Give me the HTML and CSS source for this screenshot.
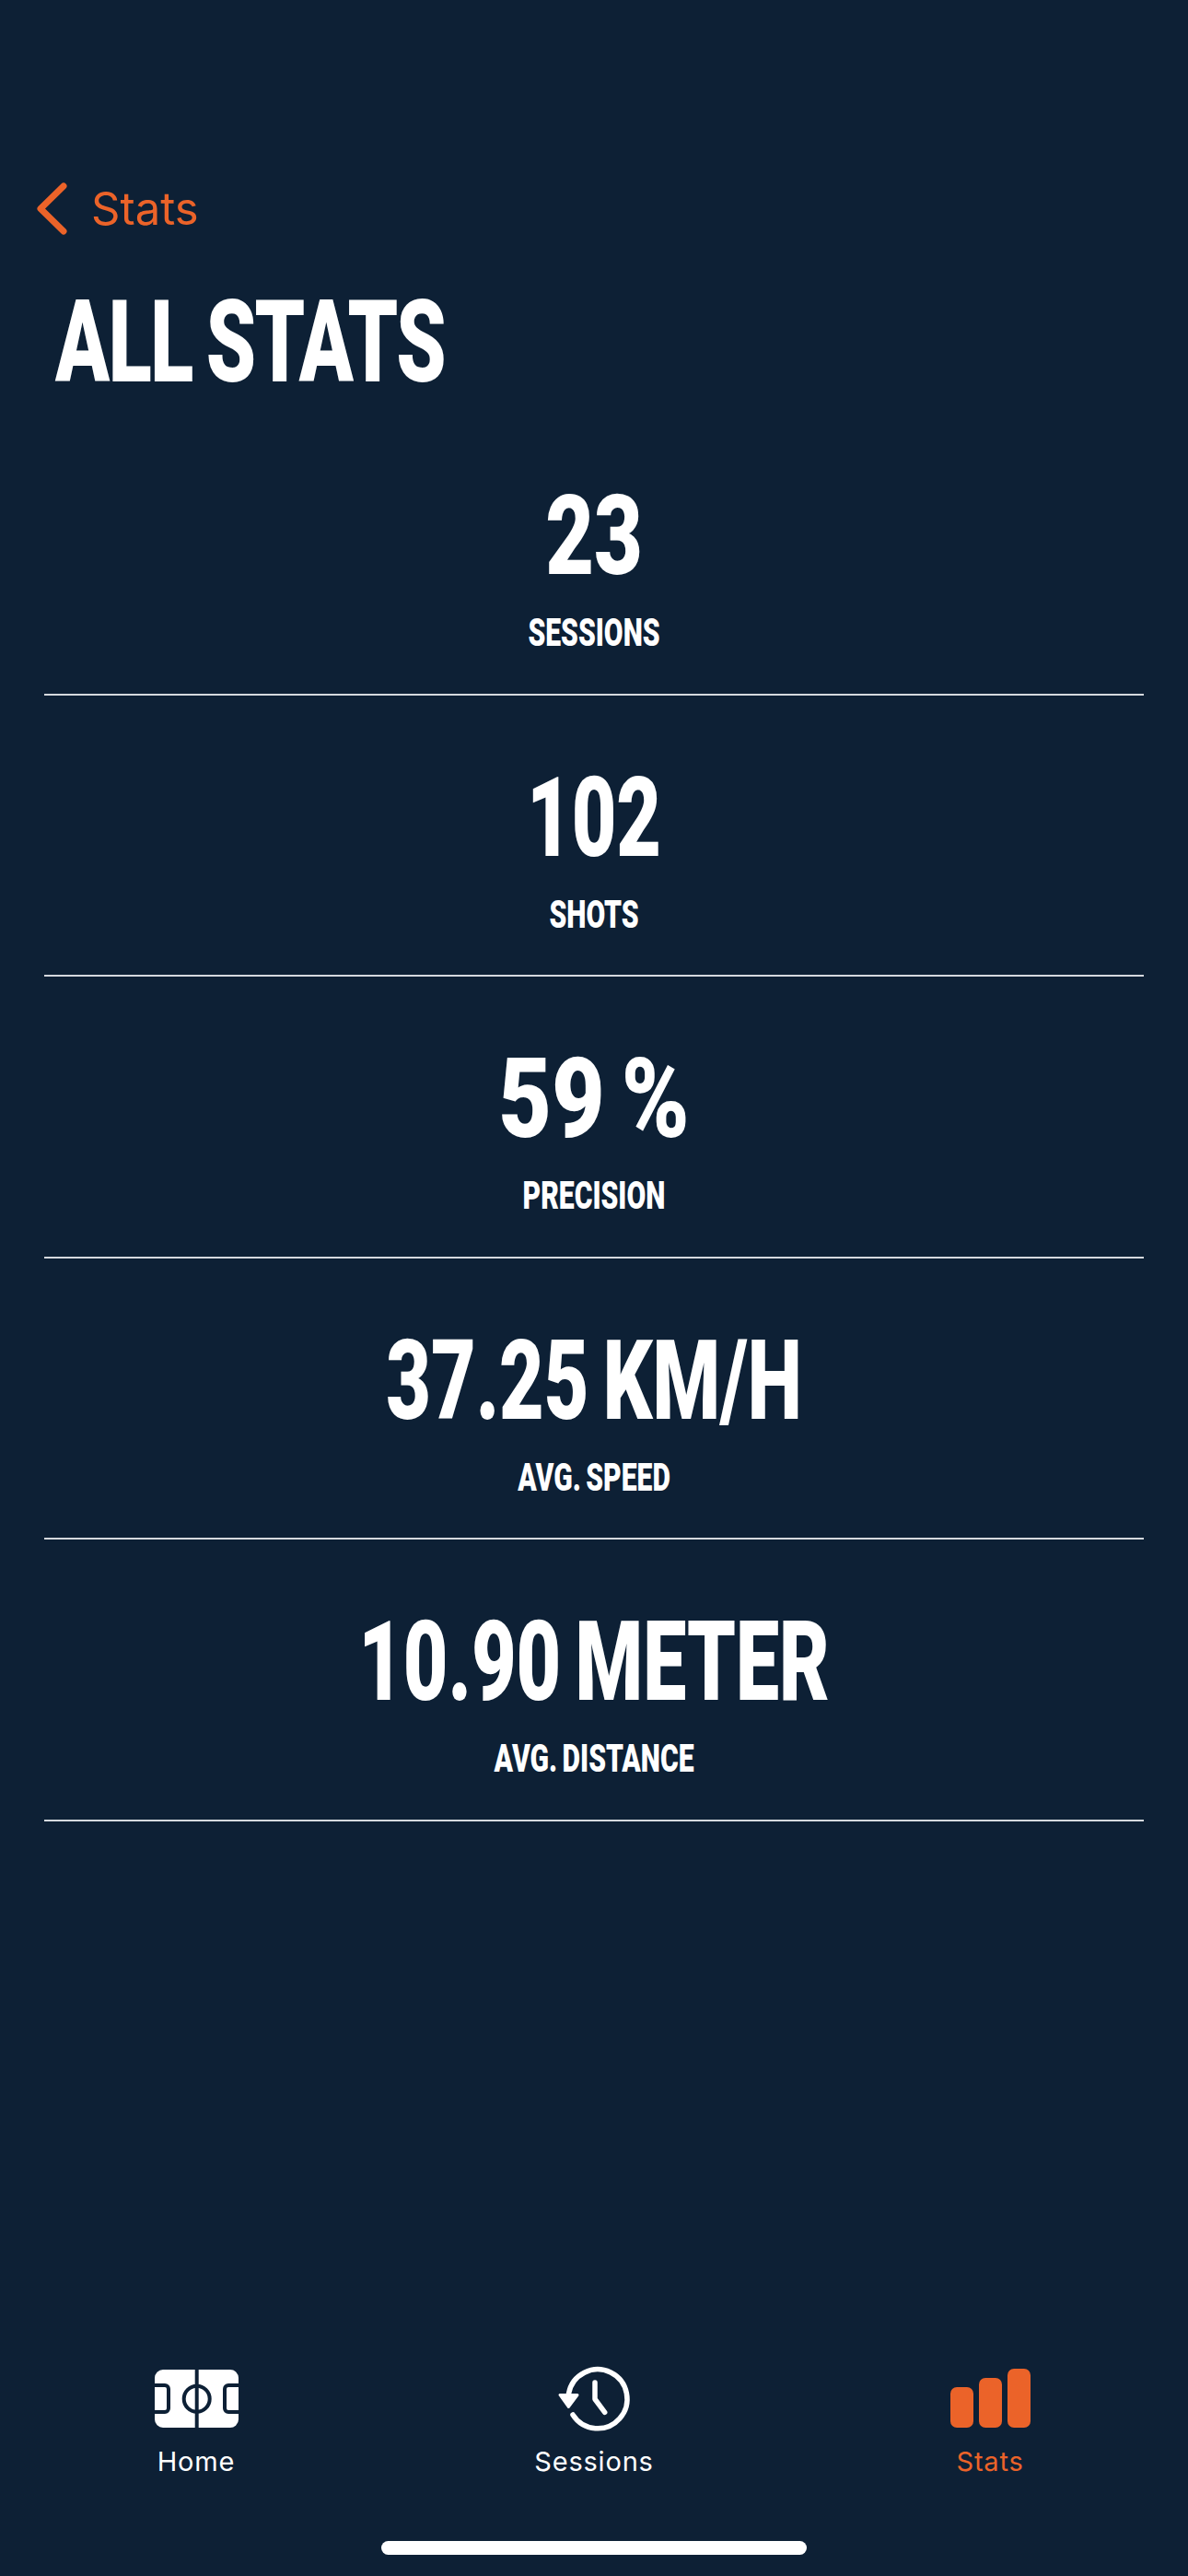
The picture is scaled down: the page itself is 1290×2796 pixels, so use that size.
FILE: index.html
```html
<!DOCTYPE html>
<html lang="en">
<head>
  <meta charset="UTF-8">
  <meta name="viewport" content="width=device-width, initial-scale=1.0">
  <title>All Stats</title>
  <link rel="stylesheet" href="styles.css">
</head>
<body>
  <div class="screen">
    <div class="back">
      <svg class="back-icon" viewBox="0 0 33 57"><polyline points="29,4 4,28.5 29,53"/></svg>
      <span class="back-label">Stats</span>
    </div>
    <h1 class="page-title">ALL STATS</h1>

    <div class="stats">
      <div class="stat">
        <div class="stat-value stat-value-short">23</div>
        <div class="stat-label">SESSIONS</div>
      </div>
      <div class="stat">
        <div class="stat-value">102</div>
        <div class="stat-label">SHOTS</div>
      </div>
      <div class="stat">
        <div class="stat-value stat-value-percent">59 %</div>
        <div class="stat-label">PRECISION</div>
      </div>
      <div class="stat">
        <div class="stat-value">37.25 KM/H</div>
        <div class="stat-label">AVG. SPEED</div>
      </div>
      <div class="stat">
        <div class="stat-value">10.90 METER</div>
        <div class="stat-label">AVG. DISTANCE</div>
      </div>
    </div>

    <nav class="tabbar">
      <div class="tab">
        <div class="tab-icon">
          <svg class="icon-home" viewBox="0 0 91 63">
            <rect class="pitch" width="91" height="63" rx="9"/>
            <g class="pitch-lines">
              <path d="M45.7 0V63"/>
              <circle cx="45.7" cy="31.7" r="14"/>
              <path d="M0 17H11a4 4 0 0 1 4 4V42a4 4 0 0 1-4 4H0"/>
              <path d="M91 17H80a4 4 0 0 0-4 4V42a4 4 0 0 0 4 4H91"/>
            </g>
          </svg>
        </div>
        <span class="tab-label">Home</span>
      </div>
      <div class="tab">
        <div class="tab-icon">
          <svg class="icon-history" viewBox="0 0 90 84">
            <path class="history-line" d="M17.5 37A32 32 0 1 1 22 60"/>
            <path class="history-line" d="M46 25V43L56.7 57.3"/>
            <path class="history-arrow" d="M8 38.5H27L17.3 51.5Z"/>
          </svg>
        </div>
        <span class="tab-label">Sessions</span>
      </div>
      <div class="tab tab-active">
        <div class="tab-icon">
          <svg class="icon-bars" viewBox="0 0 87 64">
            <rect x="0" y="20" width="25" height="44" rx="7"/>
            <rect x="31" y="10" width="25" height="54" rx="7"/>
            <rect x="62" y="0" width="25" height="64" rx="7"/>
          </svg>
        </div>
        <span class="tab-label">Stats</span>
      </div>
    </nav>
    <div class="home-bar"></div>
  </div>
</body>
</html>
```

FILE: styles.css
```css
body {
  margin: 0;
  background: #0d2035;
  font-family: 'Inter', sans-serif;
  color: #fff;
}

.screen {
  height: 2796px;
  display: flex;
  flex-direction: column;
  overflow: hidden;
}

/* back link */
.back {
  display: flex;
  align-items: center;
  gap: 26px;
  height: 57px;
  padding: 198px 0 0 40px;
}
.back-icon {
  width: 33px;
  height: 57px;
}
.back-icon polyline {
  fill: none;
  stroke: #eb6329;
  stroke-width: 7;
  stroke-linecap: round;
  stroke-linejoin: round;
}
.back-label {
  color: #eb6329;
  font-size: 49px;
}

.page-title,
.stat-value,
.stat-label {
  font-family: 'Roboto', sans-serif;
  font-weight: 900;
  white-space: nowrap;
}

.page-title {
  margin: 62px 0 0 60px;
  font-size: 124px;
  line-height: 110px;
  letter-spacing: -2px;
  word-spacing: -8px;
  transform: scaleX(0.7);
  transform-origin: left center;
}

/* stat rows */
.stats {
  margin: 22px 48px 0;
}
.stat {
  height: 305.6px;
  box-sizing: border-box;
  padding-top: 78px;
  border-bottom: 2px solid #d5d9de;
  text-align: center;
}
.stat-value {
  font-size: 120px;
  line-height: 110px;
  word-spacing: -8px;
  transform: scaleX(0.7);
}
.stat-value-short {
  transform: scaleX(0.76);
}
.stat-value-percent {
  transform: scaleX(0.83);
}
.stat-label {
  margin-top: 25px;
  font-size: 43px;
  line-height: 48px;
  word-spacing: -3px;
  transform: scaleX(0.7);
}

/* tab bar */
.tabbar {
  margin-top: auto;
  padding-right: 4px;
  display: grid;
  grid-template-columns: 426px 438px 422px;
}
.tab {
  display: flex;
  flex-direction: column;
  align-items: center;
}
.tab-icon {
  height: 70px;
  display: flex;
  align-items: center;
}
.tab-label {
  margin-top: 16px;
  font-size: 29px;
  line-height: 36px;
  letter-spacing: 0.8px;
}
.tab-active .tab-label {
  color: #eb6329;
}

.icon-home {
  width: 91px;
  height: 63px;
}
.pitch {
  fill: #fff;
}
.pitch-lines * {
  fill: none;
  stroke: #0d2035;
  stroke-width: 4;
}

.icon-history {
  width: 90px;
  height: 84px;
}
.history-line {
  fill: none;
  stroke: #fff;
  stroke-width: 5.5;
  stroke-linecap: round;
  stroke-linejoin: round;
}
.history-arrow {
  fill: #fff;
  stroke: #fff;
  stroke-width: 3;
  stroke-linejoin: round;
}

.icon-bars {
  width: 87px;
  height: 64px;
  fill: #eb6329;
}

.home-bar {
  width: 462px;
  height: 15px;
  margin: 68px auto 23px;
  border-radius: 8px;
  background: #fff;
}
```
